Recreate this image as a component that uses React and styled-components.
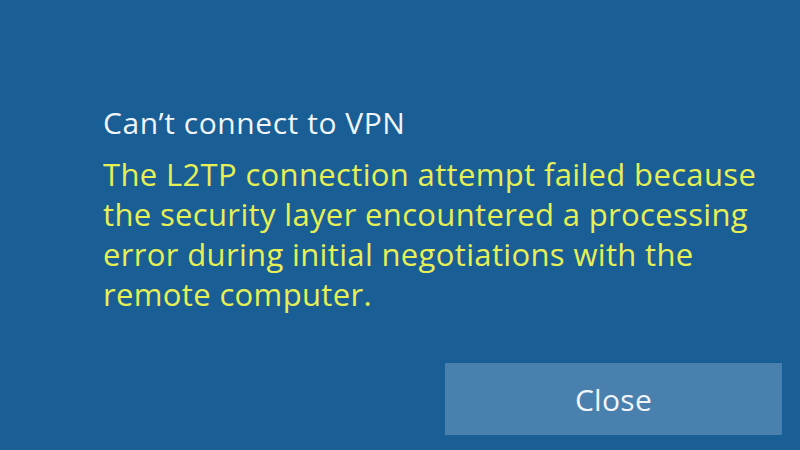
import styled, { createGlobalStyle } from "styled-components";

const Global = createGlobalStyle`
  html, body {
    margin: 0;
    padding: 0;
    background: #1a5e96;
  }
`;

const Screen = styled.div`
  width: 800px;
  height: 450px;
  box-sizing: border-box;
  display: flex;
  flex-direction: column;
  padding: 103px 18px 15px 103px;
  background: #1a5e96;
  font-family: "Open Sans", "Noto Sans", sans-serif;
  overflow: hidden;
`;

const Message = styled.div`
  display: flex;
  flex-direction: column;
  gap: 11px;
`;

const Title = styled.h1`
  margin: 0;
  font-size: 30px;
  font-weight: 400;
  line-height: 40px;
  color: #f0f5fa;
  letter-spacing: 0.55px;
`;

const Detail = styled.p`
  margin: 0;
  width: 672px;
  font-size: 31px;
  font-weight: 400;
  line-height: 40px;
  color: #e6f055;
  letter-spacing: 0.35px;
`;

const Actions = styled.div`
  margin-top: auto;
  display: flex;
  justify-content: flex-end;
`;

const Button = styled.button`
  width: 337px;
  height: 72px;
  border: none;
  background: #4a80ae;
  color: #f0f5fa;
  font-family: inherit;
  font-size: 30px;
  letter-spacing: 0.3px;
  padding: 0;
`;

const App = () => (
  <>
    <Global />
    <Screen>
      <Message>
        <Title>Can’t connect to VPN</Title>
        <Detail>
          The L2TP connection attempt failed because the security layer
          encountered a processing error during initial negotiations with the
          remote computer.
        </Detail>
      </Message>
      <Actions>
        <Button>Close</Button>
      </Actions>
    </Screen>
  </>
);

export default App;
